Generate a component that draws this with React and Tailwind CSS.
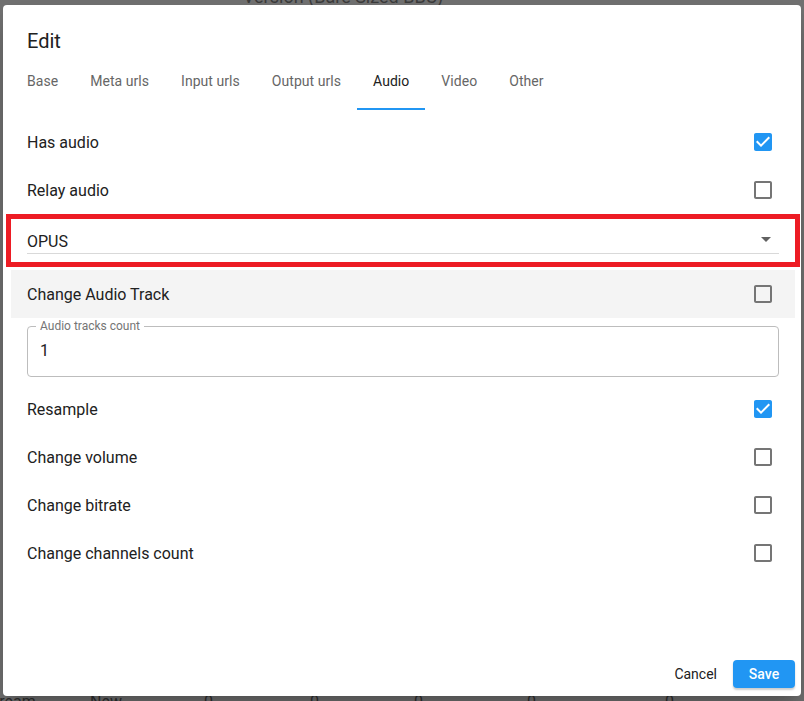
import React from 'react';

const tabs = ['Base', 'Meta urls', 'Input urls', 'Output urls', 'Audio', 'Video', 'Other'];

// table row of the page under the dialog, only its top edge shows
const bgCells = [
  ['tream', 'w-[96px]'],
  ['New', 'w-[114px]'],
  ['0', 'w-[106px]'],
  ['0', 'w-[104px]'],
  ['0', 'w-[113px]'],
  ['0', 'w-[138px]'],
  ['0', 'w-[40px]'],
];

const Check = ({ checked }) => (
  <svg width="24" height="24" viewBox="0 0 24 24" className="mr-1 shrink-0">
    {checked ? (
      <path
        fill="#2196f3"
        d="M19 3H5c-1.11 0-2 .9-2 2v14c0 1.1.89 2 2 2h14c1.11 0 2-.9 2-2V5c0-1.1-.89-2-2-2zm-9 14l-5-5 1.41-1.41L10 14.17l7.59-7.59L19 8l-9 9z"
      />
    ) : (
      <path
        fill="#757575"
        d="M19 5v14H5V5h14m0-2H5c-1.1 0-2 .9-2 2v14c0 1.1.9 2 2 2h14c1.1 0 2-.9 2-2V5c0-1.1-.9-2-2-2z"
      />
    )}
  </svg>
);

const Row = ({ label, checked, shaded }) => (
  <div className={`flex h-12 items-center justify-between px-4 ${shaded ? 'bg-[#f4f4f4]' : ''}`}>
    <span className="pt-[2px] text-base text-[#212121]">{label}</span>
    <Check checked={checked} />
  </div>
);

export default function App() {
  return (
    <div
      className="relative h-[701px] w-[804px] overflow-hidden bg-[#717171]"
      style={{ fontFamily: 'Roboto, "Liberation Sans", sans-serif' }}
    >
      {/* page behind the dialog */}
      <div className="flex h-full flex-col justify-between">
        <div className="-mt-[17px] pl-[243px] text-lg leading-7 text-[#3b3b3b]">Version (Bare Sized BBC)</div>
        <div className="-mb-[13px] -ml-[6px] flex text-base leading-6 text-[#2f2f2f]">
          {bgCells.map(([t, w], i) => (
            <span key={i} className={`shrink-0 ${w}`}>
              {t}
            </span>
          ))}
        </div>
      </div>

      {/* dialog */}
      <div className="absolute left-[3px] top-[5px] flex h-[691px] w-[798px] flex-col rounded bg-white shadow-[0_11px_15px_-7px_rgba(0,0,0,0.2),0_24px_38px_3px_rgba(0,0,0,0.14)]">
        <h2 className="px-6 pt-5 text-xl leading-8 text-[#212121]">Edit</h2>

        <div className="ml-2 flex">
          {tabs.map((t) => (
            <div
              key={t}
              className={`px-4 pt-[14px] pb-[17px] text-sm leading-5 tracking-[0.05px] ${
                t === 'Audio' ? 'border-b-2 border-[#2196f3] text-[#212121]' : 'border-b-2 border-transparent text-[#666666]'
              }`}
            >
              {t}
            </div>
          ))}
        </div>

        <div className="ml-2 mr-[6px] pt-2">
          <Row label="Has audio" checked />
          <Row label="Relay audio" />

          <div className="-mx-[5px] mb-[3px] h-[53px] border-[5px] border-[#ed1c24] px-4 pt-[11px]">
            <div className="flex h-[24px] items-start justify-between border-b border-[#d9d9d9]">
              <span className="text-base leading-6 text-[#212121]">OPUS</span>
              <svg width="24" height="24" viewBox="0 0 24 24" className="-mt-[3px] mr-[1px]">
                <path fill="#616161" d="M7 10l5 5 5-5z" />
              </svg>
            </div>
          </div>

          <Row label="Change Audio Track" shaded />

          <div className="px-4 pb-2">
            <fieldset className="h-[59px] rounded border border-[#bdbdbd] pl-3">
              <legend className="-ml-[4px] px-1 text-xs leading-4 text-[#757575]">Audio tracks count</legend>
              <div className="pt-[5px] text-base leading-6 text-[#212121]">1</div>
            </fieldset>
          </div>

          <Row label="Resample" checked />
          <Row label="Change volume" />
          <Row label="Change bitrate" />
          <Row label="Change channels count" />
        </div>

        <div className="mt-auto flex items-center justify-end gap-2 pb-[8px] pr-[6px]">
          <button className="h-7 px-2 text-sm text-[#212121]">Cancel</button>
          <button className="h-[28px] w-[62px] rounded bg-[#2196f3] text-sm font-medium text-white shadow-[0_2px_2px_rgba(0,0,0,0.2)]">
            Save
          </button>
        </div>
      </div>
    </div>
  );
}
